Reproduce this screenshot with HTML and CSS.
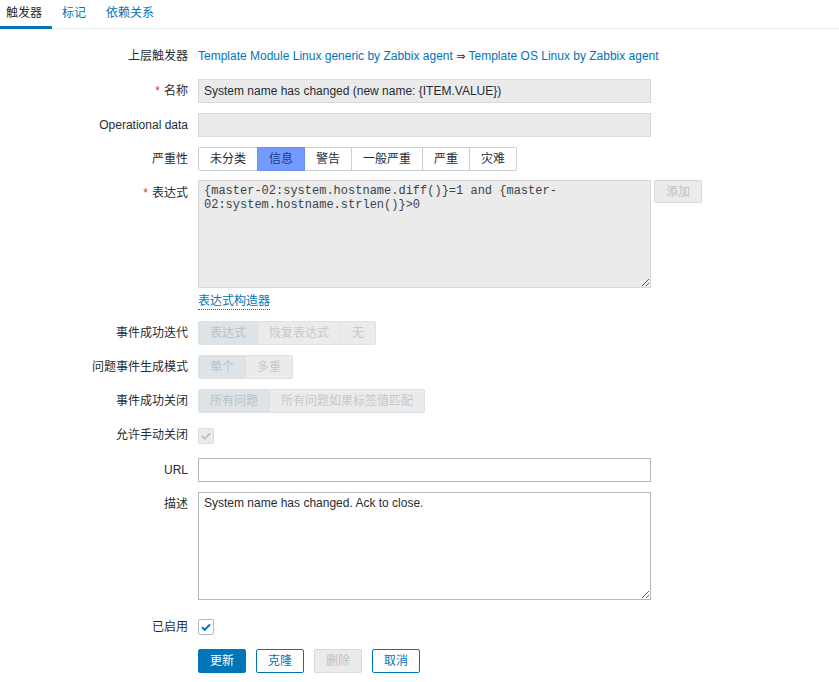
FILE: index.html
```html
<!DOCTYPE html>
<html lang="zh-CN">
<head>
<meta charset="utf-8">
<title>触发器</title>
<link rel="stylesheet" href="styles.css">
</head>
<body>
<ul class="tabs">
  <li class="tab tab-active">触发器</li>
  <li class="tab"><a class="tab-link" href="#">标记</a></li>
  <li class="tab"><a class="tab-link" href="#">依赖关系</a></li>
</ul>
<form class="form">
  <div class="row row-first">
    <label class="lbl">上层触发器</label>
    <div class="field field-text"><a class="link" href="#">Template Module Linux generic by Zabbix agent</a> <span class="arrow">⇒</span> <a class="link" href="#">Template OS Linux by Zabbix agent</a></div>
  </div>
  <div class="row">
    <label class="lbl"><span class="req">*</span>名称</label>
    <div class="field"><input class="input input-ro" type="text" readonly value="System name has changed (new name: {ITEM.VALUE})"></div>
  </div>
  <div class="row">
    <label class="lbl">Operational data</label>
    <div class="field"><input class="input input-ro" type="text" readonly value=""></div>
  </div>
  <div class="row">
    <label class="lbl">严重性</label>
    <div class="field">
      <div class="seg">
        <span class="seg-item">未分类</span><span class="seg-item seg-info">信息</span><span class="seg-item">警告</span><span class="seg-item">一般严重</span><span class="seg-item">严重</span><span class="seg-item">灾难</span>
      </div>
    </div>
  </div>
  <div class="row row-expr">
    <label class="lbl"><span class="req">*</span>表达式</label>
    <div class="field">
      <div class="expr">
        <textarea class="textarea textarea-ro textarea-mono" readonly>{master-02:system.hostname.diff()}=1 and {master-&#8203;02:system.hostname.strlen()}&gt;0</textarea>
        <button class="btn btn-disabled btn-add" type="button" disabled>添加</button>
      </div>
      <a class="link link-dotted" href="#">表达式构造器</a>
    </div>
  </div>
  <div class="row">
    <label class="lbl">事件成功迭代</label>
    <div class="field">
      <div class="seg seg-disabled">
        <span class="seg-item seg-on">表达式</span><span class="seg-item">恢复表达式</span><span class="seg-item">无</span>
      </div>
    </div>
  </div>
  <div class="row">
    <label class="lbl">问题事件生成模式</label>
    <div class="field">
      <div class="seg seg-disabled">
        <span class="seg-item seg-on">单个</span><span class="seg-item">多重</span>
      </div>
    </div>
  </div>
  <div class="row">
    <label class="lbl">事件成功关闭</label>
    <div class="field">
      <div class="seg seg-disabled">
        <span class="seg-item seg-on">所有问题</span><span class="seg-item">所有问题如果标签值匹配</span>
      </div>
    </div>
  </div>
  <div class="row">
    <label class="lbl">允许手动关闭</label>
    <div class="field field-check field-check-tall">
      <span class="check check-disabled" role="checkbox" aria-checked="true" aria-disabled="true"><svg width="14" height="14" viewBox="0 0 14 14"><path d="M3 7.2 L5.8 9.8 L11 4.4" fill="none" stroke="#b4bec3" stroke-width="1.6"/></svg></span>
    </div>
  </div>
  <div class="row">
    <label class="lbl">URL</label>
    <div class="field"><input class="input" type="text" value=""></div>
  </div>
  <div class="row">
    <label class="lbl">描述</label>
    <div class="field"><textarea class="textarea textarea-desc">System name has changed. Ack to close.</textarea></div>
  </div>
  <div class="row">
    <label class="lbl">已启用</label>
    <div class="field field-check">
      <span class="check" role="checkbox" aria-checked="true"><svg width="14" height="14" viewBox="0 0 14 14"><path d="M3 7.2 L5.8 9.8 L11 4.4" fill="none" stroke="#0275b8" stroke-width="2"/></svg></span>
    </div>
  </div>
  <div class="row">
    <span class="lbl"></span>
    <div class="field buttons">
      <button class="btn btn-primary" type="button">更新</button>
      <button class="btn btn-alt" type="button">克隆</button>
      <button class="btn btn-disabled" type="button" disabled>删除</button>
      <button class="btn btn-alt" type="button">取消</button>
    </div>
  </div>
</form>
</body>
</html>
```

FILE: styles.css
```css
html, body {
  background: #ffffff;
}
body {
  margin: 0;
  color: #1f2c33;
  font-family: "Liberation Sans", Arial, "Noto Sans CJK SC", sans-serif;
  font-size: 12px;
  line-height: 14px;
}

/* Tabs */
.tabs {
  list-style: none;
  margin: 0 0 0 -4px;
  padding: 0;
  display: flex;
  height: 29px;
  box-sizing: border-box;
  border-bottom: 1px solid #ebeef0;
}
.tab {
  box-sizing: border-box;
  height: 29px;
  padding: 6px 10px 0;
  border-bottom: 3px solid transparent;
  margin-bottom: -1px;
  line-height: 14px;
}
.tab-active {
  border-bottom-color: #0275b8;
  color: #1f2c33;
}
.tab-link {
  color: #0275b8;
  text-decoration: none;
}

/* Form */
.form {
  padding-top: 9px;
}
.row {
  display: grid;
  grid-template-columns: 188px 1fr;
  column-gap: 10px;
  padding: 5px 0;
  align-items: start;
}
.row-first {
  padding-top: 6px;
  padding-bottom: 6px;
}
.row-expr {
  padding-top: 4px;
}
.lbl {
  text-align: right;
  line-height: 24px;
  height: 24px;
  white-space: nowrap;
}
.row-expr .lbl {
  padding-top: 1px;
}
.req {
  color: #e33734;
  margin-right: 4px;
}
.field {
  min-height: 24px;
}
.field-text {
  line-height: 24px;
  height: 24px;
  white-space: nowrap;
}
.link {
  color: #0275b8;
  text-decoration: none;
}
.arrow {
  color: #1f2c33;
  font-family: "DejaVu Sans", sans-serif;
  font-size: 11px;
}
.link-dotted {
  display: inline-block;
  margin-top: 5px;
  margin-bottom: 1px;
  line-height: 16px;
  border-bottom: 1px dotted #0275b8;
}

/* Inputs */
.input {
  display: block;
  box-sizing: border-box;
  width: 453px;
  height: 24px;
  margin: 0;
  padding: 0 5px;
  border: 1px solid #acbbc2;
  background: #ffffff;
  color: #1f2c33;
  font: 12px "Liberation Sans", Arial, sans-serif;
  outline: none;
}
.input-ro {
  background: #ebebeb;
  border-color: #d9d9d9;
}
.textarea {
  display: block;
  box-sizing: border-box;
  width: 453px;
  height: 108px;
  margin: 0;
  padding: 3px 5px;
  border: 1px solid #acbbc2;
  background: #ffffff;
  color: #1f2c33;
  font: 12px/14px "Liberation Sans", Arial, sans-serif;
  resize: vertical;
  outline: none;
}
.textarea-ro {
  background: #ebebeb;
  border-color: #d9d9d9;
}
.textarea-mono {
  font-family: "Liberation Mono", "Courier New", monospace;
  font-size: 12px;
  line-height: 14px;
  color: #3a454b;
}
.textarea-desc {
  margin-bottom: 5px;
}
.expr {
  display: flex;
  align-items: flex-start;
  gap: 3px;
}

/* Segmented */
.seg {
  display: inline-flex;
  height: 24px;
}
.seg-item {
  box-sizing: border-box;
  height: 24px;
  line-height: 22px;
  padding: 0 11px;
  border: 1px solid #c8d0d4;
  background: #ffffff;
  color: #1f2c33;
  white-space: nowrap;
}
.seg-item + .seg-item {
  margin-left: -1px;
}
.seg-item:first-child {
  border-radius: 2px 0 0 2px;
}
.seg-item:last-child {
  border-radius: 0 2px 2px 0;
}
.seg-info {
  background: #7499ff;
  border-color: #6d8fee;
  color: #1f3c8c;
  position: relative;
}
.seg-disabled .seg-item {
  background: #ebebeb;
  border-color: #dde2e4;
  color: #c3c9cc;
}
.seg-disabled .seg-on {
  background: #dde3e6;
  color: #b7c2c7;
}

/* Checkbox */
.field-check {
  min-height: 24px;
  display: flex;
  align-items: center;
}
.field-check-tall {
  min-height: 25px;
}
.check {
  box-sizing: border-box;
  width: 16px;
  height: 16px;
  border: 1px solid #acbbc2;
  background: #ffffff;
  display: flex;
  align-items: center;
  justify-content: center;
  border-radius: 2px;
}
.check-disabled {
  background: #ebebeb;
  border-color: #d9dde0;
}

/* Buttons */
.buttons {
  display: flex;
  gap: 10px;
}
.btn {
  box-sizing: border-box;
  height: 24px;
  padding: 0 11px;
  margin: 0;
  border: 1px solid #0275b8;
  border-radius: 2px;
  background: #ffffff;
  color: #0275b8;
  font: 12px/22px "Liberation Sans", Arial, "Noto Sans CJK SC", sans-serif;
  cursor: pointer;
}
.btn-primary {
  background: #0275b8;
  color: #ffffff;
}
.btn-alt {
  background: #ffffff;
  color: #0275b8;
}
.btn-disabled {
  background: #ebebeb;
  border-color: #d9d9d9;
  color: #b9c2c6;
  cursor: default;
}
.btn-add {
  height: 23px;
}
```
